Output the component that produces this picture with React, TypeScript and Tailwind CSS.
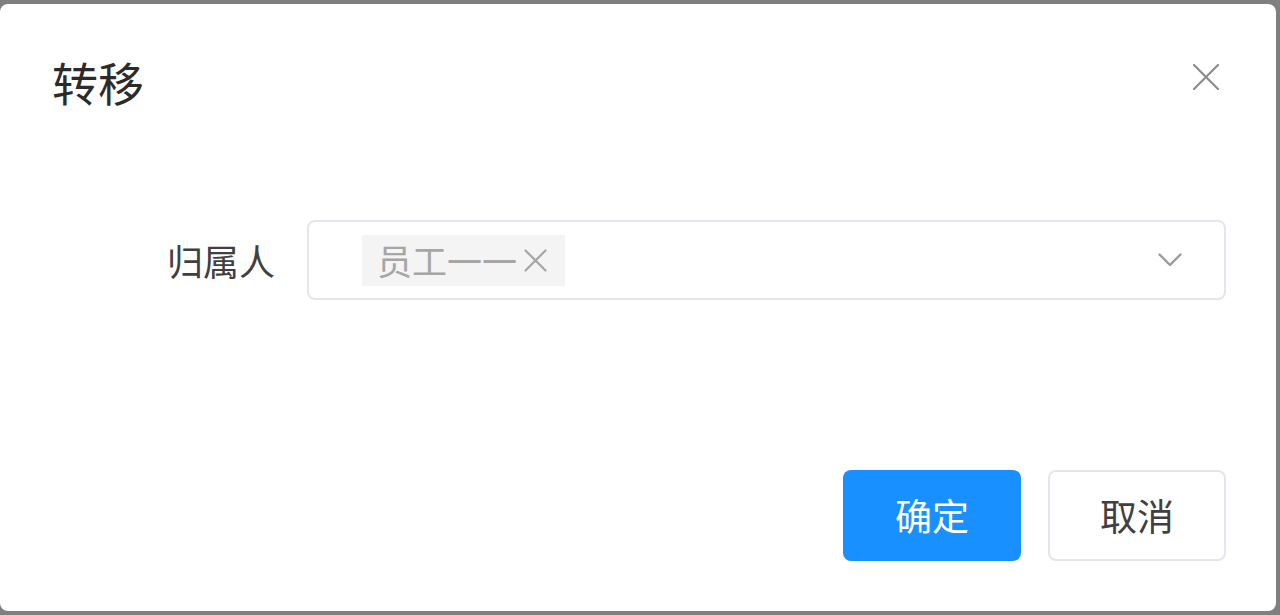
import React from "react";

const font = { fontFamily: '"Noto Sans CJK SC", "Noto Sans", sans-serif' };

export default function App() {
  return (
    <div className="w-[1280px] h-[615px] bg-[#7f7f7f] pt-[4px] pr-[4px] pb-[4px] overflow-hidden" style={font}>
      <div className="relative h-[607px] w-[1276px] bg-white rounded-[8px] flex flex-col pb-[50px] pr-[50px]">
        <div className="pl-[52px] pt-[50px] flex items-start justify-between">
          <div className="text-[46px] leading-[54px] text-[#2b2b2b]">转移</div>
          <button className="mt-[10px] mr-[7px] w-[26px] h-[26px] flex items-center justify-center">
            <svg width="26" height="26" viewBox="0 0 26 26" fill="none" stroke="#8c8c8c" strokeWidth="2.2" strokeLinecap="round">
              <path d="M1 1 L25 25 M25 1 L1 25" />
            </svg>
          </button>
        </div>
        <div className="mt-[112px] flex items-center">
          <div className="w-[275px] pr-[0px] text-right text-[36px] leading-[44px] text-[#404040]">归属人</div>
          <div className="ml-[32px] flex-1 h-[80px] border-2 border-[#e3e6ec] rounded-[8px] flex items-center pl-[53px] pr-[42px]">
            <div className="h-[51px] bg-[#f4f4f4] flex items-center pl-[15px] pr-[18px]">
              <span className="text-[35px] leading-[44px] text-[#a6a6a6]">员工一一</span>
              <svg className="ml-[7px]" width="23" height="23" viewBox="0 0 23 23" fill="none" stroke="#a6a6a6" strokeWidth="2.2" strokeLinecap="round">
                <path d="M1.5 1.5 L21.5 21.5 M21.5 1.5 L1.5 21.5" />
              </svg>
            </div>
            <div className="flex-1" />
            <svg width="24" height="14" viewBox="0 0 24 14" fill="none" stroke="#9a9a9a" strokeWidth="2.4" strokeLinecap="round" strokeLinejoin="round">
              <path d="M1.5 1.5 L12 12 L22.5 1.5" />
            </svg>
          </div>
        </div>
        <div className="flex-1" />
        <div className="flex justify-end gap-[27px]">
          <button className="w-[178px] h-[91px] rounded-[8px] bg-[#1890ff] text-white text-[37px]">确定</button>
          <button className="w-[178px] h-[91px] rounded-[8px] bg-white border-2 border-[#e3e6ec] text-[#404040] text-[37px]">取消</button>
        </div>
      </div>
    </div>
  );
}
